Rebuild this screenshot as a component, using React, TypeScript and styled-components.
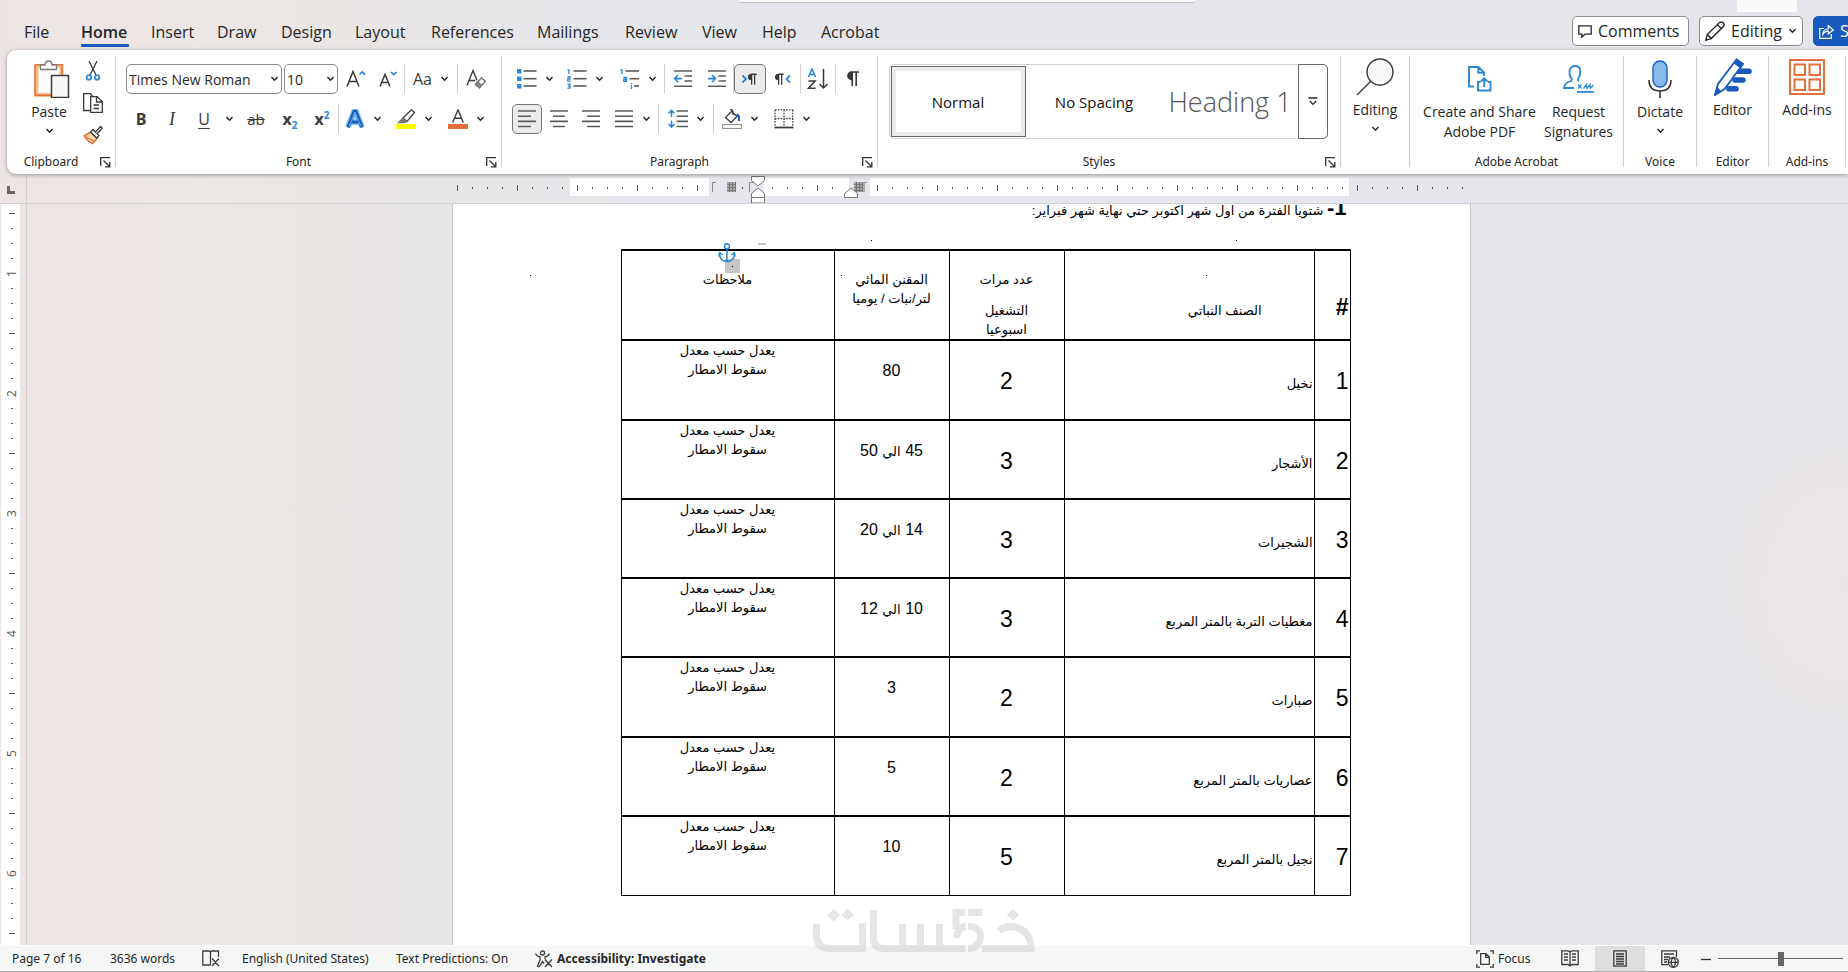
import React from "react";
import styled, { createGlobalStyle, css } from "styled-components";

const ui = `"Open Sans", "Noto Sans", sans-serif`;
const uiSmall = `"Noto Sans", "Open Sans", sans-serif`;
const ink = "#3b3a39";
const blue = "#2b88d8";
const deepBlue = "#185abd";
const orange = "#e3703a";
const line = "#d0d0d0";

const Global = createGlobalStyle`
  * { box-sizing: border-box; }
  html, body { margin: 0; height: 100%; overflow: hidden; }
  body { font-family: ${ui}; color: #262626; font-size: 14px; }
  button, select, input { font: inherit; color: inherit; margin: 0; }
  button { background: none; border: 0; padding: 0; cursor: pointer; }
  svg { display: block; flex: none; }
`;

/* ---------- shell ---------- */

const Shell = styled.div`
  position: relative;
  display: flex;
  flex-direction: column;
  height: 100vh;
  overflow: hidden;
  background:
    radial-gradient(ellipse 260px 300px at 100% 60%, #ebe5e8, transparent),
    linear-gradient(to right, #ede5e4 0, #ebe6e4 300px, #e5e6eb 620px, #e5e6eb 100%);
`;

const TopBar = styled.header`
  position: relative;
  display: flex;
  align-items: flex-start;
  height: 50px;
  flex: none;
`;

const SearchEdge = styled.div`
  position: absolute;
  left: 738px;
  top: 0;
  width: 458px;
  height: 3px;
  background: #fafafa;
  border-bottom: 1px solid #bdbdbd;
  border-radius: 0 0 4px 4px;
`;

const CaptionPatch = styled.div`
  position: absolute;
  right: 51px;
  top: 0;
  width: 60px;
  height: 12px;
  background: #fafafa;
`;

const Tabs = styled.nav`
  display: flex;
  padding-left: 12px;
  padding-top: 17px;
`;

const Tab = styled.button<{ $w: number; $on?: boolean }>`
  width: ${(p) => p.$w}px;
  height: 30px;
  padding: 0 12px;
  display: flex;
  flex-direction: column;
  justify-content: space-between;
  align-items: flex-start;
  font-size: 16px;
  line-height: 30px;
  white-space: nowrap;
  ${(p) => p.$on && css`font-weight: 600;`}
  &::after {
    content: "";
    width: 48px;
    height: 3px;
    margin-top: -3px;
    border-radius: 1px;
    background: ${(p) => (p.$on ? deepBlue : "transparent")};
  }
`;

const TopActions = styled.div`
  display: flex;
  gap: 10px;
  margin-left: auto;
  margin-right: -62px;
  padding-top: 16px;
`;

const ActionButton = styled.button<{ $w: number; $primary?: boolean }>`
  width: ${(p) => p.$w}px;
  height: 30px;
  display: flex;
  align-items: center;
  gap: 6px;
  padding: 0 5px;
  font-size: 16px;
  line-height: 28px;
  white-space: nowrap;
  border-radius: 5px;
  border: 1px solid ${(p) => (p.$primary ? deepBlue : "#8a8a8a")};
  background: ${(p) => (p.$primary ? deepBlue : "#fff")};
  color: ${(p) => (p.$primary ? "#fff" : "#262626")};
`;

/* ---------- ribbon ---------- */

const Ribbon = styled.section`
  position: relative;
  z-index: 2;
  flex: none;
  display: flex;
  height: 124px;
  margin-left: 7px;
  padding: 6px 0 7px;
  background: #fff;
  border-radius: 9px 0 0 9px;
  box-shadow: 0 1px 4px rgba(0, 0, 0, 0.35);
`;

const Group = styled.div<{ $w: number }>`
  width: ${(p) => p.$w}px;
  flex: none;
  display: flex;
  flex-direction: column;
  border-right: 1px solid ${line};
`;

const GroupBody = styled.div`
  flex: 1;
  display: flex;
  justify-content: center;
`;

const GroupFoot = styled.div`
  display: flex;
  align-items: center;
  height: 18px;
  font-family: ${uiSmall};
  font-size: 12px;
  line-height: 18px;
  margin-bottom: -4px;
`;

const GroupName = styled.span`
  flex: 1;
  text-align: center;
  white-space: nowrap;
`;

const Launcher = styled.button`
  width: 20px;
  display: flex;
  justify-content: center;
`;

const Rows = styled.div`
  flex: 1;
  display: flex;
  flex-direction: column;
  gap: 10px;
  padding: 8px 0 0 10px;
`;

const Row = styled.div`
  display: flex;
  align-items: center;
  height: 30px;
`;

const Sep = styled.span`
  width: 1px;
  height: 30px;
  background: ${line};
`;

const Tool = styled.button<{ $w?: number; $on?: boolean }>`
  width: ${(p) => p.$w ?? 32}px;
  height: 30px;
  display: flex;
  align-items: center;
  justify-content: center;
  gap: 8px;
  color: ${ink};
  ${(p) =>
    p.$on &&
    css`
      background: #ebebeb;
      border: 1px solid #767676;
      border-radius: 5px;
    `}
`;

const Letter = styled.span<{ $kind?: "bold" | "italic" | "under" | "strike" }>`
  font-size: 16px;
  line-height: 20px;
  ${(p) => p.$kind === "bold" && css`font-weight: 700;`}
  ${(p) => p.$kind === "italic" && css`font-family: "Liberation Serif", serif; font-style: italic; font-size: 18px;`}
  ${(p) => p.$kind === "under" && css`text-decoration: underline; text-underline-offset: 3px;`}
  ${(p) => p.$kind === "strike" && css`text-decoration: line-through; font-size: 15px;`}
  sub, sup { font-size: 10px; line-height: 0; color: ${blue}; font-weight: 700; }
`;

const Combo = styled.label<{ $w: number }>`
  width: ${(p) => p.$w}px;
  height: 30px;
  margin-right: 2px;
  display: grid;
  align-items: center;
  > * { grid-area: 1 / 1; }
  > svg { justify-self: end; margin-right: 3px; pointer-events: none; }
`;

const Select = styled.select`
  appearance: none;
  width: 100%;
  height: 30px;
  padding: 0 0 0 2px;
  border: 1px solid #8a8a8a;
  border-radius: 5px;
  background: #fff;
  font-size: 14px;
`;

const BigButton = styled.button<{ $w: number; $top?: number }>`
  width: ${(p) => p.$w}px;
  padding-top: ${(p) => p.$top ?? 2}px;
  display: flex;
  flex-direction: column;
  align-items: center;
  font-size: 14px;
  line-height: 20px;
`;

const Art = styled.span<{ $h: number; $indent?: number }>`
  height: ${(p) => p.$h}px;
  display: flex;
  align-items: center;
  margin-bottom: 4px;
  padding-left: ${(p) => p.$indent ?? 0}px;
`;

const ChevronSlot = styled.span`
  display: flex;
  margin-top: 6px;
`;

const SideTools = styled.div`
  display: flex;
  flex-direction: column;
  gap: 2px;
`;

const Gallery = styled.div`
  flex: 1;
  display: flex;
  height: 75px;
  margin: 8px 13px 0 11px;
  border: 1px solid ${line};
  border-radius: 5px;
`;

const StyleCard = styled.button<{ $on?: boolean; $big?: boolean }>`
  width: 135px;
  height: 71px;
  margin: 1px 0 0 1px;
  font-size: 15px;
  color: #111;
  white-space: nowrap;
  ${(p) =>
    p.$on &&
    css`
      border: 1px solid #666;
      box-shadow: inset 0 0 0 4px #ebebeb;
    `}
  ${(p) =>
    p.$big &&
    css`
      font-size: 27px;
      font-weight: 300;
      color: #555;
    `}
`;

const GalleryMore = styled.button`
  width: 30px;
  margin: -1px -1px -1px auto;
  display: flex;
  align-items: center;
  justify-content: center;
  border: 1px solid #666;
  border-radius: 0 5px 5px 0;
`;

/* ---------- work area ---------- */

const Workspace = styled.main`
  flex: 1;
  display: flex;
  min-height: 0;
  border-bottom: 1px solid #fff;
`;

const SideRuler = styled.div`
  width: 27px;
  flex: none;
  border-right: 1px solid #d3cfcf;
  overflow: hidden;
`;

const Corner = styled.div`
  height: 30px;
  padding: 12px 0 0 7px;
  border-bottom: 1px solid #d3cfcf;
`;

const SideScale = styled.div`
  width: 19px;
  height: 100%;
  margin-left: 1px;
  background: #fff;
`;

const Desk = styled.div`
  flex: 1;
  display: flex;
  flex-direction: column;
  min-width: 0;
`;

const RulerBar = styled.div`
  flex: none;
  height: 30px;
  padding-left: 47px;
  display: flex;
  justify-content: center;
  border-bottom: 1px solid #d3d3d6;
`;

const Canvas = styled.div`
  flex: 1;
  min-height: 0;
  padding-left: 47px;
  display: flex;
  justify-content: center;
  overflow: hidden;
`;

const Page = styled.article`
  position: relative;
  width: 1019px;
  flex: none;
  padding: 0 119px 0 168px;
  background: #fff;
  border: solid #c6c6c8;
  border-width: 0 1px;
  overflow: hidden;
  color: #000;
  font-family: "Liberation Sans", "DejaVu Sans", sans-serif;
  font-size: 13px;
`;

const Intro = styled.p`
  margin: -6px 0 0;
  padding-right: 4px;
  height: 51px;
  line-height: 20px;
  strong { font-size: 22px; }
`;

const Table = styled.table`
  width: 100%;
  table-layout: fixed;
  border-collapse: collapse;
  line-height: 19px;
  th, td {
    padding: 0;
    border: solid #000;
    border-width: 2px 1px;
    font-weight: 400;
    text-align: center;
    vertical-align: top;
  }
  thead tr { height: 90px; }
  tbody tr { height: 79px; }
  tbody tr:nth-child(4n + 1) { height: 80px; }
  tbody tr:last-child > * { border-bottom-width: 1px; }
`;

const IndexCell = styled.th`
  && {
    text-align: right;
    padding: 26px 1px 0 0;
    font-size: 23px;
    line-height: 28px;
  }
  thead && { padding-top: 42px; font-weight: 700; }
`;

const NameCell = styled.td`
  && { text-align: right; padding: 33px 1px 0 0; }
`;

const CountCell = styled.td`
  && { padding-top: 26px; font-size: 23px; line-height: 28px; }
`;

const AmountCell = styled.td`
  && { padding-top: 20px; font-size: 16px; }
  small { font-size: 13px; }
`;

const HeadCell = styled.th<{ $top: number; $inset?: number }>`
  && {
    padding-top: ${(p) => p.$top}px;
    ${(p) => p.$inset && css`text-align: right; padding-right: ${p.$inset}px;`}
  }
  p { margin: 0 0 12px; }
`;

const Speck = styled.i<{ $x: number; $y: number }>`
  position: absolute;
  left: ${(p) => p.$x}px;
  top: ${(p) => p.$y}px;
  width: 1px;
  height: 1px;
  background: #000;
`;

const Shade = styled.i<{ $x: number; $y: number; $w: number; $h: number }>`
  position: absolute;
  left: ${(p) => p.$x}px;
  top: ${(p) => p.$y}px;
  width: ${(p) => p.$w}px;
  height: ${(p) => p.$h}px;
  background: #c6c6c6;
`;

const AnchorMark = styled.span`
  position: absolute;
  left: 265px;
  top: 39px;
`;

const Watermark = styled.div`
  position: absolute;
  left: 44%;
  bottom: 20px;
  pointer-events: none;
`;

/* ---------- status bar ---------- */

const StatusBar = styled.footer`
  flex: none;
  display: flex;
  align-items: center;
  height: 26px;
  padding: 0 5px 0 12px;
  background: #f5f7f6;
  border-bottom: 1px solid #b0b0b0;
  font-family: ${uiSmall};
  font-size: 12px;
  line-height: 16px;
  white-space: nowrap;
`;

const StatusItem = styled.button<{ $w?: number; $strong?: boolean }>`
  display: flex;
  align-items: center;
  gap: 4px;
  ${(p) => p.$w && css`width: ${p.$w}px;`}
  ${(p) => p.$strong && css`font-weight: 700;`}
`;

const ViewButton = styled.button<{ $on?: boolean }>`
  width: 50px;
  height: 25px;
  display: flex;
  align-items: center;
  justify-content: center;
  background: ${(p) => (p.$on ? "#dededf" : "transparent")};
`;

const StatusEnd = styled.div`
  display: flex;
  align-items: center;
  margin-left: auto;
`;

const ZoomSlider = styled.input`
  appearance: none;
  width: 125px;
  height: 14px;
  background: linear-gradient(#666, #666) center / 100% 1px no-repeat;
  &::-webkit-slider-thumb {
    appearance: none;
    width: 6px;
    height: 14px;
    background: #666;
  }
`;

/* ---------- icons ---------- */

type IconProps = { w: number; h: number; children: React.ReactNode; stroke?: string; sw?: number };
const Icon = ({ w, h, children, stroke = ink, sw = 1.3 }: IconProps) => (
  <svg width={w} height={h} viewBox={`0 0 ${w} ${h}`} fill="none" stroke={stroke} strokeWidth={sw} aria-hidden="true">
    {children}
  </svg>
);

const Chevron = () => (
  <Icon w={9} h={6} stroke="#262626" sw={1.5}>
    <path d="M1.5 1 L4.5 4.2 L7.5 1" />
  </Icon>
);

const LauncherIcon = () => (
  <Icon w={11} h={11} stroke="#333">
    <path d="M.7 9 V.7 H10 M3.5 3.5 L9.5 9.5 M9.8 5 V9.8 H5" />
  </Icon>
);

const PasteIcon = () => (
  <Icon w={36} h={38}>
    <rect x="2.5" y="6" width="25" height="29" fill="#fff" stroke="#f8c088" strokeWidth="4" />
    <path d="M1 4.7 H28 V15 M1 4.7 V35.3 H17" stroke={orange} strokeWidth="1.6" />
    <path d="M6.5 9.5 V5 H11 Q11 1 14.5 1 T18 5 H22.5 V9.5 Z" fill="#fff" stroke="#777" />
    <rect x="17.5" y="15.5" width="17" height="22" fill="#f8f8f8" stroke={ink} strokeWidth="1.5" />
  </Icon>
);
const CutIcon = () => (
  <Icon w={20} h={20}>
    <path d="M6 0 L13 14 M14 0 L7 14" />
    <circle cx="6" cy="16.4" r="2.3" stroke={blue} strokeWidth="1.7" />
    <circle cx="14" cy="16.4" r="2.3" stroke={blue} strokeWidth="1.7" />
  </Icon>
);
const CopyIcon = () => (
  <Icon w={20} h={20}>
    <path d="M7 17.5 H.7 V.7 H7.5 L9.5 3" />
    <path d="M7.7 3.7 H14 L19.3 8.5 V19.3 H7.7 Z M13.5 4 V9 H19 M10.5 12 H16 M10.5 15.5 H16" fill="#fff" />
  </Icon>
);
const BrushIcon = () => (
  <Icon w={20} h={20}>
    <path d="M1.2 11 L7.5 7 L14 13.5 L9.5 18.5 Q4 16 1.2 11 Z" fill="#fbd6ad" stroke={orange} strokeWidth="1.5" />
    <path d="M3 12 L11.5 16.5" stroke={orange} />
    <path d="M7.5 7 L10 4.5 L16 10.5 L13.8 13 Z" fill="#fff" />
    <path d="M12.5 7 L17.5 1.5 L19.2 3.2 L14 8.8" fill="#fff" />
  </Icon>
);
const GrowA = ({ small }: { small?: boolean }) => (
  <Icon w={20} h={20} sw={1.5}>
    {small ? <path d="M2 17.5 L7 5.5 L12 17.5 M4 13.5 H10" /> : <path d="M1 17.5 L7 2.5 L13 17.5 M3.3 12.5 H10.7" />}
    {small ? <path d="M13 3 L15.8 5.6 L18.6 3" stroke={blue} strokeWidth="1.7" /> : <path d="M13.5 5.5 L16.2 3 L19 5.5" stroke={blue} strokeWidth="1.7" />}
  </Icon>
);
const ClearIcon = () => (
  <Icon w={20} h={20} sw={1.4}>
    <path d="M1 16.5 L7 1.5 L11 11.5 M3.3 11.5 H9" />
    <path d="M9.5 15.5 L15.5 9 L19.3 12.2 L13.5 18.7 Z" fill="#fff" stroke="#777" />
    <path d="M9.5 15.5 L11.8 13 L15.6 16.3 L13.5 18.7 Z" fill="#888" stroke="#777" />
  </Icon>
);
const EffectA = () => (
  <Icon w={20} h={20}>
    <path d="M3 18 L9 3 H11 L17 18 M6 13 H14" stroke="#86c2f2" strokeWidth="6" />
    <path d="M3 18.5 L9 2.5 H11 L17 18.5 M6 13 H14" stroke={deepBlue} strokeWidth="3.2" />
    <path d="M4 17.5 L10 3 L16 17.5" stroke="#86c2f2" strokeWidth="0.8" />
  </Icon>
);
const HighlightIcon = () => (
  <Icon w={20} h={20}>
    <path d="M7 9 L15.5 .8 L18.5 3.5 L11 12.3 Z" fill="#fff" />
    <path d="M7 9 L11 12.3 L8.5 13.5 H2.5 Z" fill="#777" stroke="#777" />
    <rect y="15" width="20" height="5" fill="#ffff00" stroke="none" />
  </Icon>
);
const FontColorIcon = () => (
  <Icon w={20} h={20} sw={1.4}>
    <path d="M4.7 13.5 L10 .8 L15.3 13.5 M6.5 9.2 H13.5" />
    <rect y="15" width="20" height="5" fill={orange} stroke="none" />
  </Icon>
);
const Bars = ({ x, w }: { x: number[]; w: number }) => (
  <>
    {[2, 9.7, 17].map((y, i) => (
      <path key={y} d={`M${x[i % x.length]} ${y} H${w}`} stroke="#5c5b5a" strokeWidth="1.6" />
    ))}
  </>
);
const BulletIcon = () => (
  <Icon w={20} h={20}>
    {[0, 7.5, 15].map((y) => <rect key={y} y={y} width="4.5" height="4.5" fill={blue} stroke="none" />)}
    <Bars x={[6.5]} w={19.5} />
  </Icon>
);
const NumberIcon = () => (
  <Icon w={20} h={20}>
    <path d="M.5 1 H2 V5 M.3 8 H3 V10 H.8 V12.2 H3.5 M.3 15.2 H3 V19.2 H.3 M1 17.2 H3" stroke={blue} strokeWidth="1.3" />
    <Bars x={[6.5]} w={19.5} />
  </Icon>
);
const MultiIcon = () => (
  <Icon w={20} h={20}>
    <path d="M.5 1 H2 V5 M3.5 8.5 H6.5 V12.3 H3.8 V10.3 H6.5 M11.5 16 V20 M11.5 13.7 V15" stroke={blue} strokeWidth="1.4" />
    <Bars x={[5.5, 9.5, 14]} w={19} />
  </Icon>
);
const IndentIcon = ({ out }: { out?: boolean }) => (
  <Icon w={20} h={20}>
    <path d="M1 2 H19 M11.5 7 H19 M11.5 12 H19 M1 17.3 H19" stroke="#5c5b5a" strokeWidth="1.6" />
    <path d={out ? "M9 9.6 H2 M5 6 L1.6 9.6 L5 13.2" : "M1 9.6 H8 M5 6 L8.4 9.6 L5 13.2"} stroke={blue} strokeWidth="1.6" />
  </Icon>
);
const Pilcrow = ({ x, y, s }: { x: number; y: number; s: number }) => (
  <g transform={`translate(${x} ${y}) scale(${s})`}>
    <path d="M5.5 1 A3.6 3.6 0 0 0 5.5 8.5 Z" fill={ink} />
    <path d="M5.5 1 H13 M6.2 1 V15 M10.2 1 V15" strokeWidth="1.7" />
  </g>
);
const LtrIcon = () => (
  <Icon w={18} h={16}>
    <path d="M1.5 4.5 L5 8 L1.5 11.5" stroke={blue} strokeWidth="1.8" />
    <Pilcrow x={6} y={2.5} s={0.75} />
  </Icon>
);
const RtlIcon = () => (
  <Icon w={18} h={16}>
    <path d="M16 4.5 L12.5 8 L16 11.5" stroke={blue} strokeWidth="1.8" />
    <Pilcrow x={0} y={2.5} s={0.75} />
  </Icon>
);
const SortIcon = () => (
  <Icon w={22} h={22}>
    <path d="M1.5 9 L5 1 L8.5 9 M2.5 6.5 H7.5" stroke={blue} strokeWidth="1.6" />
    <path d="M1.5 13 H8 L1.5 20.3 H8.5" strokeWidth="1.6" />
    <path d="M16.5 1 V20 M12.5 16 L16.5 20 L20.5 16" strokeWidth="1.5" />
  </Icon>
);
const AlignIcon = ({ kind }: { kind: "left" | "center" | "right" | "full" }) => {
  const d = {
    left: "M1 2 H19 M1 7.2 H14 M1 12.4 H19 M1 17.5 H14",
    center: "M1 2 H19 M4 7.2 H16 M1 12.4 H19 M4 17.5 H16",
    right: "M1 2 H19 M6 7.2 H19 M1 12.4 H19 M6 17.5 H19",
    full: "M1 2 H19 M1 7.2 H19 M1 12.4 H19 M1 17.5 H19",
  }[kind];
  return (
    <Icon w={20} h={20} stroke="#5c5b5a" sw={1.6}>
      <path d={d} />
    </Icon>
  );
};
const SpacingIcon = () => (
  <Icon w={20} h={20}>
    <path d="M8.5 2 H20 M8.5 7.2 H20 M8.5 12.4 H20 M8.5 17.5 H20" stroke="#5c5b5a" strokeWidth="1.6" />
    <path d="M3.5 1.5 V8 M.6 4.3 L3.5 1.4 L6.4 4.3 M3.5 11.5 V18 M.6 15 L3.5 18 L6.4 15" stroke={blue} strokeWidth="1.6" />
  </Icon>
);
const ShadingIcon = () => (
  <Icon w={20} h={20}>
    <path d="M9.5 2.5 L3.5 8.5 L9 13.5 L15 7.5 L9 2 M8 1 Q11 -.5 11 4 V6" />
    <path d="M14.5 5.5 Q18 6 16.8 12" stroke={deepBlue} strokeWidth="2" />
    <rect x=".6" y="15.6" width="18.8" height="3.8" stroke="#888" strokeWidth="1" />
  </Icon>
);
const BorderIcon = () => (
  <Icon w={20} h={20}>
    <path d="M1 .8 H19 M1 1 V17 M18.8 1 V17 M10 1 V17 M1 9.5 H19" strokeDasharray="1.5 1.3" />
    <path d="M.5 18.5 H19.5" strokeWidth="1.8" />
  </Icon>
);
const MoreIcon = () => (
  <Icon w={10} h={9} stroke="#262626">
    <path d="M.5 1 H9.5 M1.8 4 L5 7.4 L8.2 4" />
  </Icon>
);
const FindIcon = () => (
  <Icon w={38} h={38} sw={1.4}>
    <circle cx="24" cy="14" r="13" fill="#fafafa" />
    <path d="M15 23 L1 37" />
  </Icon>
);
const PdfIcon = () => (
  <Icon w={24} h={26} stroke={blue} sw={1.9}>
    <path d="M6 20.5 H1 V1 H10.5 L16 6.5 V10 M10.3 1 V6.8 H16 M12.5 16 H10 V24.5 H22.5 V16 H20 M16.2 21 V12.5 M12.8 15.5 L16.2 12.2 L19.6 15.5" />
  </Icon>
);
const SignIcon = () => (
  <Icon w={32} h={28} stroke={blue} sw={1.8}>
    <path d="M11 23 H1 Q1 18 8 16 Q9.5 14.5 8 13 Q6 10 6.5 6 Q7.5 1 11.8 1 Q17 1 17.3 6 Q17.5 10 15.5 13 Q14 15 16 16" />
    <path d="M15 19.5 L18.5 23.5 M18.5 19.5 L15 23.5 M20.5 23.5 L23.5 19.5 L24 23.3 L27 19.5 L27.5 23.3 L30.5 20" strokeWidth="1.3" />
    <path d="M14 26.9 H31" />
  </Icon>
);
const MicIcon = () => (
  <Icon w={24} h={38} sw={1.6}>
    <rect x="5" y="1" width="14" height="26" rx="7" fill="#86bbe9" stroke={deepBlue} strokeWidth="1.4" />
    <path d="M1 20 Q1 31 12 31 T23 20 M12 31 V38" />
  </Icon>
);
const EditorIcon = () => (
  <Icon w={38} h={38} stroke={deepBlue}>
    <path d="M25 13.2 H35 M21 22 H29 M15 30.8 H22" strokeWidth="5.6" strokeLinecap="round" />
    <path d="M1 37 L4 26 L22.5 1.5 L29 6 L10.5 31 Z" fill="#fff" strokeWidth="1.8" />
    <path d="M22.5 1.5 L29 6 L26.5 9.5 L20 4.8 Z M1 37 L3 29.5 L6.5 33.5 Z" fill={deepBlue} />
  </Icon>
);
const AddinIcon = () => (
  <Icon w={36} h={36} stroke={orange} sw={2}>
    <path d="M1 1 H35 V35 H1 Z M5.5 5.5 H16 V16 H5.5 Z M20.5 5.5 H31 V16 H20.5 Z M5.5 20.5 H16 V31 H5.5 Z M20.5 20.5 H31 V31 H20.5 Z" />
  </Icon>
);
const CommentIcon = () => (
  <Icon w={14} h={13} stroke="#262626">
    <path d="M.8 .8 H13.2 V9.2 H7 L3.8 12.3 V9.2 H.8 Z" />
  </Icon>
);
const PencilIcon = () => (
  <Icon w={20} h={20} stroke="#262626" sw={1.4}>
    <path d="M.8 19.2 L2.3 13.5 L14.5 1.5 Q16.5 .2 18.3 1.8 Q19.8 3.6 18.4 5.6 L6.3 17.6 Z M12.5 3.7 L16.3 7.5 M2.3 13.5 L6.3 17.6" />
  </Icon>
);
const ShareIcon = () => (
  <Icon w={15} h={15} stroke="#fff" sw={1.2}>
    <path d="M5 4.5 H.7 V14.3 H12.3 V10 M3.8 10.5 Q4 5 9.3 5 V1.5 L14.3 6 L9.3 10 V7.2 Q6 7 3.8 10.5 Z" />
  </Icon>
);
const ProofIcon = () => (
  <Icon w={18} h={17}>
    <path d="M8.5 15 H.8 V1 H7 Q8.5 1 8.5 3 V15 M8.5 3 Q8.5 1 10 1 H16.5 V7 M10 8.5 L17 16 M17 8.5 L10 16" />
  </Icon>
);
const AccessIcon = () => (
  <Icon w={18} h={18}>
    <circle cx="7.5" cy="3" r="2" />
    <path d="M1 3.5 Q.5 5.5 5 6.8 V10 L2.5 16 Q4 17.5 5 15.5 L7.5 11.5 L9 13.5 M14 3.5 Q14.5 5.5 10 6.8 V9 M10 9.5 L17 17 M17 9.5 L10 17" />
  </Icon>
);
const FocusIcon = () => (
  <Icon w={18} h={18}>
    <path d="M4 .8 H.8 V4 M14 .8 H17.2 V4 M4 17.2 H.8 V14 M14 17.2 H17.2 V14 M4.7 3.7 H10 L13.3 7 V14.3 H4.7 Z M9.7 4 V7.3 H13" />
  </Icon>
);
const ReadIcon = () => (
  <Icon w={18} h={17}>
    <path d="M9 2 V16 M9 2 Q8 .8 6.5 .8 H.8 V14.5 H7 L9 16 L11 14.5 H17.2 V.8 H11.5 Q10 .8 9 2 M3 4 H7 M3 7 H7 M3 10 H7 M11 4 H15 M11 7 H15 M11 10 H15" />
  </Icon>
);
const PrintIcon = () => (
  <Icon w={14} h={17}>
    <path d="M.8 .8 H13.2 V16.2 H.8 Z M3 4 H11 M3 6.5 H11 M3 9 H11 M3 11.5 H11 M3 14 H11" />
  </Icon>
);
const WebIcon = () => (
  <Icon w={18} h={18}>
    <path d="M7 14.7 H.8 V.8 H15.5 V7 M3 4 H13 M3 7 H9 M3 9.5 H7 M3 12 H6" />
    <circle cx="12.3" cy="12.3" r="5" fill="#f5f7f6" />
    <path d="M7.3 12.3 H17.3 M12.3 7.3 Q7.8 12 12.3 17.3 Q16.8 12 12.3 7.3" />
  </Icon>
);
const AnchorIcon = () => (
  <Icon w={18} h={20} stroke={blue} sw={1.5}>
    <circle cx="9" cy="3.2" r="2.5" />
    <path d="M9 6 V18.5 M1.5 10.5 Q2 18.5 9 18.5 T16.5 10.5 M.8 13.5 L1.7 9.8 L4.8 12 M17.2 13.5 L16.3 9.8 L13.2 12" />
  </Icon>
);

/* Horizontal ruler: a mark every 15px, a tall one on each fourth. */
const hiddenMarks = [17, 18, 20, 26, 27];
const TopScale = () => (
  <svg width={1019} height={29} viewBox="0 0 1019 29" fill="none" stroke="#555" aria-hidden="true">
    <g fill="#fff" stroke="none">
      <rect x="118" y="4" width="139" height="18" />
      <rect x="312" y="4" width="85" height="18" />
      <rect x="418" y="4" width="479" height="18" />
    </g>
    {Array.from({ length: 68 }, (_, k) => k)
      .filter((k) => !hiddenMarks.includes(k))
      .map((k) => (
        <path key={k} d={k % 4 === 0 ? `M${5.5 + 15 * k} 11 V17` : `M${5.5 + 15 * k} 13 V15`} />
      ))}
    <path d="M264 8.5 H260.5 V18 M301 8.5 H297.5 V18 M411 8.5 H415" stroke="#888" />
    {[275, 402].map((x) => (
      <g key={x}>
        <rect x={x} y="8" width={x === 275 ? 9 : 11} height="10" fill="#aaa" stroke="none" />
        <path d={`M${x} 10.5 h9 M${x} 13.5 h9 M${x} 16.5 h9 M${x + 2.5} 8 v10 M${x + 5.5} 8 v10 M${x + 8.5} 8 v10`} stroke="#777" />
      </g>
    ))}
    <g fill="#fff" stroke="#777">
      <path d="M299.5 2.5 H312.5 V6.5 L306 12 L299.5 6.5 Z M299.5 23.5 V19.5 L306 14 L312.5 19.5 V23.5 Z M299.5 23.5 H312.5 V29 H299.5 Z M392.5 23.5 V19.5 L399 14 L405.5 19.5 V23.5 Z" />
    </g>
  </svg>
);

const LeftScale = () => (
  <svg width={19} height={741} viewBox="0 0 19 741" aria-hidden="true">
    {Array.from({ length: 49 }, (_, k) => {
      const y = 9.5 + 15 * k;
      if (k % 8 === 4)
        return (
          <text key={k} transform={`translate(15 ${y}) rotate(-90)`} textAnchor="middle" fontSize="12" fill="#555" fontFamily={ui}>
            {(k + 4) / 8}
          </text>
        );
      return <path key={k} d={k % 8 === 0 ? `M8 ${y} H14` : `M10 ${y} H12`} stroke="#555" />;
    })}
  </svg>
);

const WatermarkArt = () => (
  <svg width={222} height={43} viewBox="0 0 222 43" fill="none" stroke="#c9c5cb" strokeWidth="7" opacity="0.45" role="img" aria-label="خمسات">
    <path d="M20.6 0 L27 6.2 L20.6 12.4 L14.4 6.2 Z M34.8 0 L41 6 L34.8 11.6 L28.6 6 Z M200 0 L206.4 6 L200 11.6 L193.6 6 Z" fill="#c9c5cb" stroke="none" />
    <path d="M3.5 15 V26 Q3.5 39.5 17 39.5 H49.5 V14" />
    <path d="M60.5 1 V29 Q60.5 39.5 71 39.5 H152.5 M89.5 15 V36 M107.5 15 V36 M126.5 15 V36" />
    <path d="M152.5 3.5 H143 V20 M155 3.5 H169 M152.5 17 Q144 19 143.5 29 M155 17.5 Q168 18 167.5 28 Q166 39.5 155 39.5" />
    <path d="M186 22 Q191 17.5 198 17.5 Q218 19 218 39.5 H169" />
  </svg>
);

/* ---------- content ---------- */

const tabs: [string, number][] = [
  ["File", 57], ["Home", 70], ["Insert", 66], ["Draw", 64], ["Design", 74], ["Layout", 76],
  ["References", 106], ["Mailings", 88], ["Review", 77], ["View", 60], ["Help", 59], ["Acrobat", 84],
];

const plants = [
  { name: "نخيل", count: 2, amount: [80] },
  { name: "الأشجار", count: 3, amount: [45, 50] },
  { name: "الشجيرات", count: 3, amount: [14, 20] },
  { name: "مغطيات التربة بالمتر المربع", count: 3, amount: [10, 12] },
  { name: "صبارات", count: 2, amount: [3] },
  { name: "عصاريات بالمتر المربع", count: 2, amount: [5] },
  { name: "نجيل بالمتر المربع", count: 5, amount: [10] },
];

const specks = [[77, 71], [388, 71], [418, 36], [783, 36], [753, 71]];

const Foot = ({ name, launcher }: { name?: string; launcher?: boolean }) => (
  <GroupFoot>
    <GroupName>{name}</GroupName>
    {launcher && (
      <Launcher aria-label={`${name} settings`}>
        <LauncherIcon />
      </Launcher>
    )}
  </GroupFoot>
);

export default function App() {
  return (
    <Shell>
      <Global />
      <TopBar>
        <SearchEdge />
        <CaptionPatch />
        <Tabs>
          {tabs.map(([name, w]) => (
            <Tab key={name} $w={w} $on={name === "Home"}>{name}</Tab>
          ))}
        </Tabs>
        <TopActions>
          <ActionButton $w={117}><CommentIcon />Comments</ActionButton>
          <ActionButton $w={104}><PencilIcon />Editing<Chevron /></ActionButton>
          <ActionButton $w={97} $primary><ShareIcon />Share</ActionButton>
        </TopActions>
      </TopBar>

      <Ribbon>
        <Group $w={109}>
          <GroupBody>
            <BigButton $w={64} $top={4}>
              <Art $h={38} $indent={6}><PasteIcon /></Art>
              Paste
              <ChevronSlot><Chevron /></ChevronSlot>
            </BigButton>
            <SideTools>
              <Tool $w={24} aria-label="Cut"><CutIcon /></Tool>
              <Tool $w={24} aria-label="Copy"><CopyIcon /></Tool>
              <Tool $w={24} aria-label="Format painter"><BrushIcon /></Tool>
            </SideTools>
          </GroupBody>
          <Foot name="Clipboard" launcher />
        </Group>

        <Group $w={386}>
          <Rows>
            <Row>
              <Combo $w={156}>
                <Select aria-label="Font name"><option>Times New Roman</option></Select>
                <Chevron />
              </Combo>
              <Combo $w={54}>
                <Select aria-label="Font size"><option>10</option></Select>
                <Chevron />
              </Combo>
              <Tool $w={32} aria-label="Grow font"><GrowA /></Tool>
              <Tool $w={32} aria-label="Shrink font"><GrowA small /></Tool>
              <Sep />
              <Tool $w={52}><Letter>Aa</Letter><Chevron /></Tool>
              <Sep />
              <Tool $w={36} aria-label="Clear formatting"><ClearIcon /></Tool>
            </Row>
            <Row>
              <Tool $w={30}><Letter $kind="bold">B</Letter></Tool>
              <Tool><Letter $kind="italic">I</Letter></Tool>
              <Tool><Letter $kind="under">U</Letter></Tool>
              <Tool $w={18} aria-label="Underline style"><Chevron /></Tool>
              <Tool $w={36}><Letter $kind="strike">ab</Letter></Tool>
              <Tool><Letter $kind="bold">x<sub>2</sub></Letter></Tool>
              <Tool><Letter $kind="bold">x<sup>2</sup></Letter></Tool>
              <Sep />
              <Tool $w={48} aria-label="Text effects"><EffectA /><Chevron /></Tool>
              <Tool $w={54} aria-label="Highlight"><HighlightIcon /><Chevron /></Tool>
              <Tool $w={50} aria-label="Font color"><FontColorIcon /><Chevron /></Tool>
            </Row>
          </Rows>
          <Foot name="Font" launcher />
        </Group>

        <Group $w={376}>
          <Rows>
            <Row>
              <Tool $w={46} aria-label="Bullets"><BulletIcon /><Chevron /></Tool>
              <Tool $w={54} aria-label="Numbering"><NumberIcon /><Chevron /></Tool>
              <Tool $w={52} aria-label="Multilevel list"><MultiIcon /><Chevron /></Tool>
              <Sep />
              <Tool $w={36} aria-label="Decrease indent"><IndentIcon out /></Tool>
              <Tool $w={32} aria-label="Increase indent"><IndentIcon /></Tool>
              <Sep />
              <Tool $w={32} $on aria-label="Left to right"><LtrIcon /></Tool>
              <Tool $w={34} aria-label="Right to left"><RtlIcon /></Tool>
              <Sep />
              <Tool $w={34} aria-label="Sort"><SortIcon /></Tool>
              <Sep />
              <Tool $w={34} aria-label="Show marks">
                <Icon w={14} h={18}><Pilcrow x={0} y={1} s={1} /></Icon>
              </Tool>
            </Row>
            <Row>
              <Tool $w={30} $on aria-label="Align left"><AlignIcon kind="left" /></Tool>
              <Tool $w={34} aria-label="Center"><AlignIcon kind="center" /></Tool>
              <Tool $w={30} aria-label="Align right"><AlignIcon kind="right" /></Tool>
              <Tool $w={52} aria-label="Justify"><AlignIcon kind="full" /><Chevron /></Tool>
              <Sep />
              <Tool $w={54} aria-label="Line spacing"><SpacingIcon /><Chevron /></Tool>
              <Sep />
              <Tool $w={52} aria-label="Shading"><ShadingIcon /><Chevron /></Tool>
              <Tool $w={52} aria-label="Borders"><BorderIcon /><Chevron /></Tool>
            </Row>
          </Rows>
          <Foot name="Paragraph" launcher />
        </Group>

        <Group $w={463}>
          <GroupBody>
            <Gallery>
              <StyleCard $on>Normal</StyleCard>
              <StyleCard>No Spacing</StyleCard>
              <StyleCard $big>Heading 1</StyleCard>
              <GalleryMore aria-label="More styles"><MoreIcon /></GalleryMore>
            </Gallery>
          </GroupBody>
          <Foot name="Styles" launcher />
        </Group>

        <Group $w={69}>
          <GroupBody>
            <BigButton $w={66}>
              <Art $h={38}><FindIcon /></Art>
              Editing
              <ChevronSlot><Chevron /></ChevronSlot>
            </BigButton>
          </GroupBody>
        </Group>

        <Group $w={214}>
          <GroupBody>
            <BigButton $w={124} $top={4}>
              <Art $h={38}><PdfIcon /></Art>
              Create and Share<br />Adobe PDF
            </BigButton>
            <BigButton $w={74} $top={4}>
              <Art $h={38}><SignIcon /></Art>
              Request<br />Signatures
            </BigButton>
          </GroupBody>
          <Foot name="Adobe Acrobat" />
        </Group>

        <Group $w={73}>
          <GroupBody>
            <BigButton $w={60} $top={4}>
              <Art $h={38}><MicIcon /></Art>
              Dictate
              <ChevronSlot><Chevron /></ChevronSlot>
            </BigButton>
          </GroupBody>
          <Foot name="Voice" />
        </Group>
        <Group $w={72}>
          <GroupBody>
            <BigButton $w={60}><Art $h={38}><EditorIcon /></Art>Editor</BigButton>
          </GroupBody>
          <Foot name="Editor" />
        </Group>
        <Group $w={77}>
          <GroupBody>
            <BigButton $w={66}><Art $h={38}><AddinIcon /></Art>Add-ins</BigButton>
          </GroupBody>
          <Foot name="Add-ins" />
        </Group>
      </Ribbon>

      <Workspace>
        <SideRuler>
          <Corner>
            <Icon w={8} h={8} stroke="#666" sw={3}><path d="M1.5 0 V6.5 H8" /></Icon>
          </Corner>
          <SideScale><LeftScale /></SideScale>
        </SideRuler>
        <Desk>
          <RulerBar><TopScale /></RulerBar>
          <Canvas>
            <Page dir="rtl" lang="ar">
              <Intro><strong>1-</strong> شتويا الفترة من اول شهر اكتوبر حتي نهاية شهر فبراير:</Intro>
              <Table>
                <colgroup>
                  <col style={{ width: 36 }} />
                  <col style={{ width: 250 }} />
                  <col style={{ width: 115 }} />
                  <col style={{ width: 115 }} />
                  <col />
                </colgroup>
                <thead>
                  <tr>
                    <IndexCell scope="col">#</IndexCell>
                    <HeadCell scope="col" $top={50} $inset={52}>الصنف النباتي</HeadCell>
                    <HeadCell scope="col" $top={19}><p>عدد مرات</p>التشغيل<br />اسبوعيا</HeadCell>
                    <HeadCell scope="col" $top={19}>المقنن المائي<br />لتر/نبات / يوميا</HeadCell>
                    <HeadCell scope="col" $top={19}>ملاحظات</HeadCell>
                  </tr>
                </thead>
                <tbody>
                  {plants.map((p, i) => (
                    <tr key={p.name}>
                      <IndexCell scope="row">{i + 1}</IndexCell>
                      <NameCell>{p.name}</NameCell>
                      <CountCell>{p.count}</CountCell>
                      <AmountCell>
                        {p.amount[0]}
                        {p.amount[1] && <> <small>الي</small> {p.amount[1]}</>}
                      </AmountCell>
                      <td>يعدل حسب معدل<br />سقوط الامطار</td>
                    </tr>
                  ))}
                </tbody>
              </Table>
              <Shade $x={272} $y={55} $w={15} $h={14} />
              <Shade $x={305} $y={39} $w={8} $h={2} />
              {specks.map(([x, y]) => <Speck key={`${x}-${y}`} $x={x} $y={y} />)}
              <Speck $x={279} $y={62} />
              <AnchorMark><AnchorIcon /></AnchorMark>
            </Page>
          </Canvas>
        </Desk>
      </Workspace>

      <StatusBar>
        <StatusItem $w={98}>Page 7 of 16</StatusItem>
        <StatusItem $w={92}>3636 words</StatusItem>
        <StatusItem $w={40} aria-label="Proofing"><ProofIcon /></StatusItem>
        <StatusItem $w={154}>English (United States)</StatusItem>
        <StatusItem $w={139}>Text Predictions: On</StatusItem>
        <StatusItem $strong><AccessIcon />Accessibility: Investigate</StatusItem>
        <StatusEnd>
          <StatusItem $w={69}><FocusIcon />Focus</StatusItem>
          <ViewButton aria-label="Read mode"><ReadIcon /></ViewButton>
          <ViewButton $on aria-label="Print layout"><PrintIcon /></ViewButton>
          <ViewButton aria-label="Web layout"><WebIcon /></ViewButton>
          <StatusItem $w={23} aria-label="Zoom out"><Icon w={16} h={10} stroke="#333"><path d="M6 5.5 H16" /></Icon></StatusItem>
          <ZoomSlider type="range" min={0} max={100} defaultValue={50} aria-label="Zoom" />
        </StatusEnd>
      </StatusBar>

      <Watermark><WatermarkArt /></Watermark>
    </Shell>
  );
}
